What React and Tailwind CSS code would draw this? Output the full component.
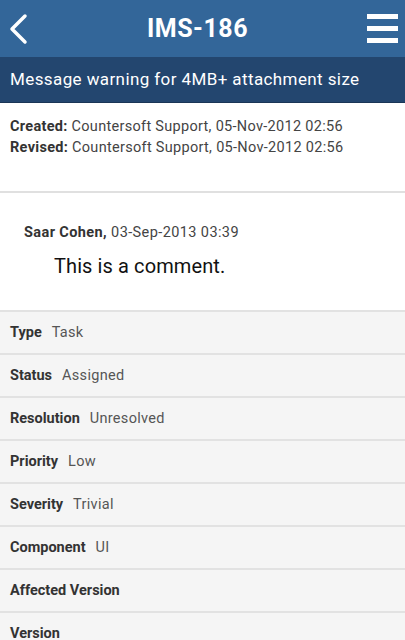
export default function App() {
  const rows = [
    ["Type", "Task"],
    ["Status", "Assigned"],
    ["Resolution", "Unresolved"],
    ["Priority", "Low"],
    ["Severity", "Trivial"],
    ["Component", "UI"],
    ["Affected Version", ""],
    ["Version", ""],
  ];
  return (
    <div className="w-[405px] h-[640px] overflow-hidden bg-[#f5f5f5] font-['Roboto',sans-serif]">
      <div className="h-[57px] bg-[#336699] flex items-center justify-between pl-[8px] pr-[7px]">
        <svg width="20" height="32" viewBox="0 0 20 32">
          <path d="M17 3 L4 16 L17 29" stroke="white" strokeWidth="3.5" fill="none" strokeLinecap="round" strokeLinejoin="round" />
        </svg>
        <div className="text-white text-[25px] font-bold tracking-[0.5px]">IMS-186</div>
        <div className="flex flex-col gap-[7px] w-[31px]">
          <div className="h-[5px] bg-white" />
          <div className="h-[5px] bg-white" />
          <div className="h-[5px] bg-white" />
        </div>
      </div>
      <div className="h-[46px] bg-[#23466f] border-b border-[#1a3556] flex items-center px-[10px]">
        <div className="text-white text-[17px] tracking-[0.4px]">Message warning for 4MB+ attachment size</div>
      </div>
      <div className="bg-white h-[88px] pt-[13px] px-[10px] text-[14.5px] leading-[21px] text-[#444] tracking-[0.3px]">
        <div><span className="font-bold text-[#333]">Created:</span> Countersoft Support, 05-Nov-2012 02:56</div>
        <div><span className="font-bold text-[#333]">Revised:</span> Countersoft Support, 05-Nov-2012 02:56</div>
      </div>
      <div className="h-[2px] bg-[#e0e0e0]" />
      <div className="bg-white h-[117px] pt-[31px]">
        <div className="pl-[24px] text-[14.5px] leading-[18px] text-[#444] tracking-[0.4px]">
          <span className="font-bold text-[#333]">Saar Cohen,</span> 03-Sep-2013 03:39
        </div>
        <div className="pl-[54px] pt-[12px] text-[20px] leading-[24px] text-[#111] tracking-[0.1px]">This is a comment.</div>
      </div>
      {rows.map(([k, v]) => (
        <div key={k} className="h-[43px] border-t-2 border-[#e2e2e2] flex items-center px-[10px] text-[14.5px]">
          <span className="font-bold text-[#333]">{k}</span>
          {v && <span className="ml-[10px] text-[#555] tracking-[0.3px]">{v}</span>}
        </div>
      ))}
    </div>
  );
}
